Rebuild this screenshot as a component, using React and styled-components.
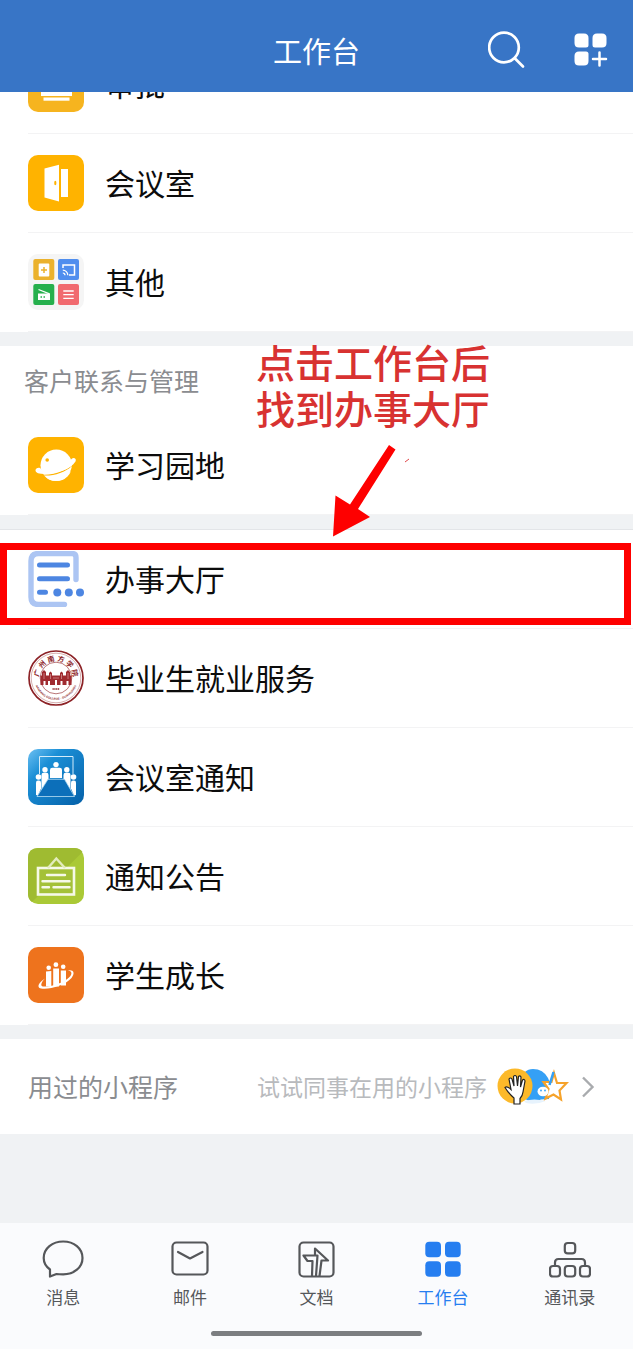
import React from "react";
import styled, { createGlobalStyle, css } from "styled-components";

const GlobalStyle = createGlobalStyle`
  * {
    box-sizing: border-box;
  }

  body {
    margin: 0;
    background: #f0f2f4;
    font-family: "Noto Sans CJK SC", "Noto Sans", sans-serif;
  }

  button {
    font-family: inherit;
    border: 0;
    padding: 0;
    background: none;
    cursor: pointer;
  }
`;

const ApprovalIcon = () => (
  <Icon viewBox="0 0 56 56" aria-hidden="true">
    <rect width="56" height="56" rx="10" fill="#f6b41f" />
    <path d="M22 10h12v14h7q3 0 3 3v13H13V27q0-3 3-3h6z" fill="#fff" />
    <rect x="15.5" y="41.5" width="26" height="3.2" fill="#fff" />
  </Icon>
);

const DoorIcon = () => (
  <Icon viewBox="0 0 56 56" aria-hidden="true">
    <rect width="56" height="56" rx="10" fill="#ffb300" />
    <path d="M16.5 13.5 31 9.8v36.6l-14.5-4z" fill="#fff" />
    <rect x="33" y="14" width="7" height="28" fill="#fff" />
    <ellipse cx="27.3" cy="28" rx="1.1" ry="2.2" fill="#ffb300" />
  </Icon>
);

const OtherIcon = () => (
  <Icon viewBox="0 0 56 56" aria-hidden="true">
    <rect width="56" height="56" rx="10" fill="#f5f5f5" />
    <rect x="5.3" y="5" width="21" height="21" rx="2" fill="#ebb22d" />
    <rect x="30" y="5" width="21" height="21" rx="2" fill="#508eee" />
    <rect x="5.3" y="30" width="21" height="21" rx="2" fill="#26b04d" />
    <rect x="30" y="30" width="21" height="21" rx="2" fill="#f16a6f" />
    <rect x="10.7" y="9.5" width="10.6" height="13" rx="1" fill="#fff" />
    <path d="M16 13v6M13 16h6" stroke="#ebb22d" strokeWidth="1.5" />
    <path d="M35 14v-3h11.5v10H41" fill="none" stroke="#fff" strokeWidth="1.5" />
    <path d="M34.8 16.2a5 5 0 0 1 5 5M34.8 19a2.2 2.2 0 0 1 2.2 2.2" fill="none" stroke="#fff" strokeWidth="1.2" />
    <path d="M10 39.5h12V46H10z" fill="#fff" />
    <path d="m10.5 35.5 11 4.3" stroke="#fff" strokeWidth="1.3" />
    <path d="M12.5 43h1.5M15.5 43H17" stroke="#26b04d" strokeWidth="1.5" />
    <path d="M35.3 37h10.4M35.3 40.7h10.4M35.3 44.3h10.4" stroke="#fff" strokeWidth="1.3" />
  </Icon>
);

const PlanetIcon = () => (
  <Icon viewBox="0 0 56 56" aria-hidden="true">
    <rect width="56" height="56" rx="10" fill="#ffb300" />
    <circle cx="28.3" cy="28.3" r="15.8" fill="#fff" />
    <path d="M8 36c9 5 33-1 41-13l2 4C43 39 21 43 9 39z" fill="#ffb300" />
    <path d="M16 38.5c10 .5 21-3 28-9.5-1.600 8.500-8 15-15.700 15-5 0-9.500-2-12.300-5.500z" fill="#fff" />
    <path d="M12 31c-5-1-6 4-2 5.300C20 39 42 34 47.500 24.500c1.500-3-2-4.500-4-2.500L36 31l-20 3.500z" fill="#fff" />
    <circle cx="19.2" cy="23" r="1.8" fill="#ffb300" />
  </Icon>
);

const HallIcon = () => (
  <Icon viewBox="0 0 56 56" aria-hidden="true">
    <path
      d="M48 28.5V6.5q0-4-4-4H10.500q-7.500 0-7.500 7.500v36q0 7.500 7.500 7.500h26"
      fill="none"
      stroke="#acc5f3"
      strokeWidth="5.4"
      strokeLinecap="round"
    />
    <path d="M11.5 14h28M11.5 27.7h28M11.5 41.3h6" stroke="#4d86e2" strokeWidth="5" strokeLinecap="round" />
    <circle cx="29.3" cy="41.5" r="4" fill="#4d86e2" />
    <circle cx="40.8" cy="41.5" r="4" fill="#4d86e2" />
    <circle cx="52" cy="41.5" r="4" fill="#4d86e2" />
  </Icon>
);

const SealIcon = () => (
  <Icon viewBox="0 0 56 56" aria-hidden="true">
    <circle cx="28" cy="28" r="27" fill="#fff" stroke="#8c2226" strokeWidth="1.7" />
    <circle cx="28" cy="28" r="24.8" fill="none" stroke="#b8787a" strokeWidth=".6" />
    <circle cx="28" cy="28" r="15.8" fill="none" stroke="#a85457" strokeWidth=".8" />
    {["广", "州", "南", "方", "学", "院"].map((char, i) => (
      <SealChar key={char} x="28" y="11" transform={`rotate(${-75 + i * 30} 28 28)`}>
        {char}
      </SealChar>
    ))}
    <path id="seal-arc" d="M6.5 31a21.7 21.7 0 0 0 43 0" fill="none" />
    <SealLatin>
      <textPath href="#seal-arc" startOffset="50%">
        NANFANG COLLEGE · GUANGZHOU
      </textPath>
    </SealLatin>
    <path
      d="M12.5 35v-9.500h1.500V22l2-2 2 2v3.500h3V23l1.500-1.500L24 23v2.500h8V23l1.500-1.500L35 23v2.500h3V22l2-2 2 2v3.500h1.500V35h-3v-4h-2v4h-4v-4h-2v4h-3.500v-5h-2v5H22v-4h-2v4h-2.500v-4h-2v4z"
      fill="#a02b30"
    />
    <path d="M16 23v6M22.500 24v5M25 28h6M33.500 24v5M40 23v6" stroke="#d99a9c" strokeWidth=".7" />
    <path d="M24.5 39h7" stroke="#8c2226" strokeWidth="1.5" strokeDasharray="1.3 .5" />
  </Icon>
);

const MeetingIcon = () => (
  <Icon viewBox="0 0 56 56" aria-hidden="true">
    <defs>
      <linearGradient id="meeting-bg" x1="0" y1="0" x2="1" y2="1">
        <stop offset="0" stopColor="#6cc0f2" />
        <stop offset=".3" stopColor="#1b8fd6" />
        <stop offset="1" stopColor="#0560a8" />
      </linearGradient>
    </defs>
    <rect width="56" height="56" rx="10" fill="url(#meeting-bg)" />
    <path d="M11.5 25V7.5H45V25" fill="none" stroke="#d3ecfa" strokeWidth="1" />
    <g fill="#fff">
      <circle cx="28" cy="15.6" r="2.7" />
      <path d="M22 29v-8q0-2.300 2.300-2.300h7.400q2.300 0 2.300 2.300v8z" />
      <circle cx="17" cy="20.7" r="2.7" />
      <path d="M13.500 41V26q0-2.300 2-2.300h3q2 0 2 2.300v4z" />
      <circle cx="38.8" cy="20.7" r="2.7" />
      <path d="M42.500 41V26q0-2.300-2-2.300h-3q-2 0-2 2.300v4z" />
      <circle cx="10.5" cy="28" r="2.8" />
      <path d="M8 46V33.500q0-2 2-2h1q2 0 2 2v6l-3 7z" />
      <circle cx="45.5" cy="28" r="2.8" />
      <path d="M48 46V33.500q0-2-2-2h-1q-2 0-2 2v6l3 7z" />
    </g>
    <path d="M20 30.3h16.5l10 17.2H9z" fill="#0c6fba" stroke="#b9def4" strokeWidth=".8" />
  </Icon>
);

const NoticeIcon = () => (
  <Icon viewBox="0 0 56 56" aria-hidden="true">
    <rect width="56" height="56" rx="10" fill="#aac936" />
    <path d="M10 0h36q6 0 8.5 4L4 54q-4-3-4-8V10Q0 0 10 0z" fill="#9fbb31" />
    <path d="M10 20h36L54 30v16q0 10-10 10H18L10 46.500z" fill="#aac936" />
    <rect x="10" y="20" width="36" height="26.5" fill="#a4c138" stroke="#f6f9e8" strokeWidth="2.6" />
    <path d="M20 20l8.300-9.500L37 20" fill="none" stroke="#e3ecbd" strokeWidth="2.4" />
    <path d="M19 27h18M14.5 33.3h27M14.5 39.2H21M25.5 39.2h16" stroke="#f6f9e8" strokeWidth="2.4" strokeLinecap="round" />
  </Icon>
);

const GrowthIcon = () => (
  <Icon viewBox="0 0 56 56" aria-hidden="true">
    <rect width="56" height="56" rx="10" fill="#ee731d" />
    <path
      d="M17 31.5C11 35 8 40.500 13 41.500c8 1.500 24-3 30.500-10.500 4-5 2-8.500-3.500-7.500 4 .5 4.500 3.500 1.500 6.500C35 36.500 22 40 15 39.500c-2.500-.5-2.500-3.500 2-8z"
      fill="#fff"
    />
    <g fill="#fff">
      <path d="M18 24.500l5.300-.5v15.500H18zM25.200 21.500h5.800v18h-5.800zM32.800 23.500h5.200V38.500h-5.200z" />
      <circle cx="20.7" cy="20.8" r="2.3" />
      <circle cx="27.9" cy="17.7" r="2.4" />
      <circle cx="35.2" cy="19.8" r="2.3" />
    </g>
  </Icon>
);

const SearchIcon = () => (
  <svg width="38" height="38" viewBox="0 0 38 38" fill="none" stroke="#fff" strokeWidth="2.7" aria-hidden="true">
    <circle cx="16" cy="16.5" r="14.8" />
    <path d="m27 27.500 8 8" strokeLinecap="round" />
  </svg>
);

const AddAppIcon = () => (
  <svg width="34" height="34" viewBox="0 0 34 34" fill="#fff" aria-hidden="true">
    <path d="M5 .5h5q4.500 0 4.500 4.500v7q0 2.500-2.500 2.500H5Q.5 14.500.5 10V5Q.5.5 5 .5z" />
    <path d="M23 .5h5Q32.500.5 32.500 5v5q0 4.500-4.500 4.500h-7q-2.500 0-2.500-2.500V5Q18.500.5 23 .5z" />
    <path d="M5 18.500h7q2.500 0 2.500 2.500v7q0 4.500-4.500 4.500H5Q.5 32.500.5 28v-5q0-4.500 4.500-4.500z" />
    <path d="M25.500 19.500v13M19 26h13" stroke="#fff" strokeWidth="2.5" strokeLinecap="round" />
  </svg>
);

const MiniPrograms = () => (
  <svg width="72" height="38" viewBox="0 0 72 38" aria-hidden="true">
    <path d="M36 1a17 17 0 0 1 15 9q3 6 1.500 13L52 31l-8 .5Q36 36 28 31V4q3-3 8-3z" fill="#35a0f5" />
    <path d="M27 33q10-3 22 0-10 4-20 2z" fill="#e7f3fd" />
    <path d="m57 5 3 10h9.500l-7 7.500 1.500 9-7.500-5-8 4 3-9.500-5-7h8z" fill="#fff" stroke="#f6a32b" strokeWidth="2.2" />
    <path d="m56.500 4-4 13" stroke="#35a0f5" strokeWidth="2.5" />
    <circle cx="18" cy="18" r="17.5" fill="#fcb929" />
    <path
      d="M17 36v-6q-5-4-9-10.500 2-2 6 2L12 11q1.500-2 3 0l2 7-.5-9.500q1.500-2 3 0l1 9.500 1-9.500q1.500-1.500 2.500.5l-.5 10 2-7q2-1.500 2.500 1L26 24q-.5 4-3 6.500V36z"
      fill="#fff"
      stroke="#222"
      strokeWidth="1.2"
    />
    <ellipse cx="46" cy="23.5" rx="5.5" ry="4.8" fill="#fff" />
    <circle cx="44" cy="22.5" r=".9" fill="#35a0f5" />
    <circle cx="48" cy="22.5" r=".9" fill="#35a0f5" />
  </svg>
);

const Chevron = () => (
  <svg width="14" height="24" viewBox="0 0 14 24" fill="none" aria-hidden="true">
    <path d="m2 2.500 9.500 9.500L2 21.500" stroke="#a9abae" strokeWidth="2.4" />
  </svg>
);

const MessageIcon = () => (
  <TabSvg viewBox="0 0 42 42" aria-hidden="true">
    <path d="M21.2 3.500C32 3.500 40.500 10.500 40.500 20s-8.500 16.300-19.300 16.300c-2.700 0-4.500 0-6.700-.3L8 38.500V31.500C4.500 29 1.700 25 1.700 20 1.700 10.500 10.400 3.500 21.200 3.500z" />
  </TabSvg>
);

const MailIcon = () => (
  <TabSvg viewBox="0 0 42 42" aria-hidden="true">
    <rect x="3.5" y="4.5" width="35" height="32" rx="4" />
    <path d="m9 14 12 6.500L33.500 14" />
  </TabSvg>
);

const DocIcon = () => (
  <TabSvg viewBox="0 0 42 42" aria-hidden="true">
    <rect x="4.5" y="4.5" width="34" height="34" rx="4" />
    <path d="M17 38l.5-15H12.500L8.500 17.500H20v-7L33 22.500h-6.500L24.500 38M20 17.500h2.500L21 38" />
  </TabSvg>
);

const WorkbenchIcon = () => (
  <TabSvg viewBox="0 0 42 42" $solid aria-hidden="true">
    <rect x="3.3" y="3.7" width="15.7" height="15.5" rx="4" />
    <rect x="23" y="3.7" width="15.7" height="15.5" rx="4" />
    <rect x="3.3" y="23.3" width="15.7" height="15.5" rx="4" />
    <rect x="23" y="23.3" width="15.7" height="15.5" rx="4" />
  </TabSvg>
);

const ContactsIcon = () => (
  <TabSvg viewBox="0 0 42 42" aria-hidden="true">
    <rect x="15.8" y="5" width="10.4" height="10.4" rx="3" />
    <rect x="1" y="28" width="10" height="10.5" rx="3" />
    <rect x="15.8" y="28" width="10.4" height="10.5" rx="3" />
    <rect x="31" y="28" width="10" height="10.5" rx="3" />
    <path d="M6 28v-3.500q0-3.500 3.500-3.500h23q3.500 0 3.500 3.500V28" />
  </TabSvg>
);

const basicApps = [
  { name: "会议室", icon: <DoorIcon /> },
  { name: "其他", icon: <OtherIcon /> },
];

const schoolApps = [
  { name: "办事大厅", icon: <HallIcon />, marked: true },
  { name: "毕业生就业服务", icon: <SealIcon /> },
  { name: "会议室通知", icon: <MeetingIcon /> },
  { name: "通知公告", icon: <NoticeIcon /> },
  { name: "学生成长", icon: <GrowthIcon /> },
];

const tabs = [
  { name: "消息", icon: <MessageIcon /> },
  { name: "邮件", icon: <MailIcon /> },
  { name: "文档", icon: <DocIcon /> },
  { name: "工作台", icon: <WorkbenchIcon />, active: true },
  { name: "通讯录", icon: <ContactsIcon /> },
];

const AppRow = ({ name, icon, marked }) => (
  <Row>
    <RowLink href="#">
      {icon}
      <RowName>{name}</RowName>
    </RowLink>
    {marked && <Marker />}
  </Row>
);

const App = () => {
  return (
    <Page>
      <GlobalStyle />
      <Header>
        <Title>工作台</Title>
        <Actions>
          <button type="button" aria-label="搜索">
            <SearchIcon />
          </button>
          <button type="button" aria-label="添加应用">
            <AddAppIcon />
          </button>
        </Actions>
      </Header>

      <Main>
        <Section>
          <ScrolledList>
            <AppRow name="审批" icon={<ApprovalIcon />} />
          </ScrolledList>
          <List>
            {basicApps.map((app) => (
              <AppRow key={app.name} {...app} />
            ))}
          </List>
        </Section>

        <Section>
          <SectionTitle>客户联系与管理</SectionTitle>
          <List>
            <AppRow name="学习园地" icon={<PlanetIcon />} />
          </List>
          <Tip>
            点击工作台后
            <br />
            找到办事大厅
          </Tip>
          <Arrow width="80" height="94" viewBox="0 0 80 94" aria-hidden="true">
            <path d="M59 2 65.500 6.500 28 66 40 74 3 93.500 5.500 52.500l14.500 9z" fill="#fe0000" />
            <path d="m75 19 4-3" stroke="#e0474a" strokeWidth="1" />
          </Arrow>
        </Section>

        <Section $lined>
          <List>
            {schoolApps.map((app) => (
              <AppRow key={app.name} {...app} />
            ))}
          </List>
        </Section>

        <Used href="#">
          <UsedTitle>用过的小程序</UsedTitle>
          <UsedHint>试试同事在用的小程序</UsedHint>
          <MiniPrograms />
          <Chevron />
        </Used>
      </Main>

      <Footer>
        <TabBar>
          {tabs.map((tab) => (
            <Tab key={tab.name} type="button" $active={tab.active}>
              {tab.icon}
              {tab.name}
            </Tab>
          ))}
        </TabBar>
        <HomeIndicator />
      </Footer>
    </Page>
  );
};

const Page = styled.div`
  display: flex;
  flex-direction: column;
  min-height: 100vh;
`;

const Header = styled.header`
  display: grid;
  grid-template-columns: 1fr auto 1fr;
  align-items: center;
  height: 92px;
  padding: 8px 25px 0;
  background: #3875c6;
  color: #fff;
`;

const Title = styled.h1`
  grid-column: 2;
  margin: 0;
  font-size: 29px;
  font-weight: 400;
  line-height: 40px;
`;

const Actions = styled.div`
  display: flex;
  justify-content: flex-end;
  align-items: center;
  gap: 48px;

  svg {
    display: block;
  }
`;

const Main = styled.main`
  display: flex;
  flex-direction: column;
  flex: 1;
  gap: 14px;
`;

const Section = styled.section`
  position: relative;
  background: #fff;
  ${(props) =>
    props.$lined &&
    css`
      border-top: 1px solid #e3e5e8;
    `}
`;

const SectionTitle = styled.h2`
  margin: 0;
  padding: 16px 24px 18px;
  color: #8a8c90;
  font-size: 25px;
  font-weight: 400;
  line-height: 36px;
`;

const List = styled.ul`
  margin: 0;
  padding: 0;
  list-style: none;
`;

const ScrolledList = styled(List)`
  display: flex;
  flex-direction: column;
  justify-content: flex-end;
  height: 42px;
  overflow: hidden;
`;

const Row = styled.li`
  position: relative;
  flex-shrink: 0;
  padding-left: 28px;
`;

const RowLink = styled.a`
  display: flex;
  align-items: center;
  gap: 21px;
  height: 99px;
  border-bottom: 1px solid #f3f3f4;
  color: #0c0c0c;
  text-decoration: none;
`;

const RowName = styled.span`
  padding-bottom: 2px;
  font-size: 30px;
  line-height: 44px;
`;

const Icon = styled.svg`
  flex-shrink: 0;
  width: 56px;
  height: 56px;
`;

const SealChar = styled.text`
  fill: #8c2226;
  font-size: 7px;
  font-weight: 700;
  text-anchor: middle;
`;

const SealLatin = styled.text`
  fill: #8c2226;
  font-family: "Liberation Sans", sans-serif;
  font-size: 3px;
  font-weight: 700;
  text-anchor: middle;
`;

const Marker = styled.div`
  position: absolute;
  top: 13px;
  right: 2px;
  left: 0;
  height: 82px;
  border: 7px solid #fe0000;
  pointer-events: none;
`;

const Tip = styled.p`
  position: absolute;
  top: -8px;
  left: 256px;
  margin: 0;
  color: #d83231;
  font-size: 39px;
  font-weight: 500;
  line-height: 46px;
`;

const Arrow = styled.svg`
  position: absolute;
  top: 97px;
  left: 330px;
  z-index: 1;
`;

const Used = styled.a`
  display: flex;
  align-items: center;
  height: 95px;
  padding: 0 38px 0 28px;
  background: #fff;
  text-decoration: none;
`;

const UsedTitle = styled.span`
  flex: 1;
  padding-bottom: 2px;
  color: #8a8c90;
  font-size: 25px;
  line-height: 36px;
`;

const UsedHint = styled.span`
  margin-right: 10px;
  padding-bottom: 2px;
  color: #b8babd;
  font-size: 23px;
  line-height: 36px;

  & + svg {
    margin-right: 12px;
  }
`;

const Footer = styled.footer`
  padding: 15px 0 13px;
  background: #fafbfd;
`;

const TabBar = styled.nav`
  display: grid;
  grid-template-columns: repeat(5, 1fr);
`;

const Tab = styled.button`
  display: flex;
  flex-direction: column;
  align-items: center;
  gap: 5px;
  color: ${(props) => (props.$active ? "#267ef0" : "#55575a")};
  font-size: 17px;
  line-height: 24px;
`;

const TabSvg = styled.svg`
  width: 42px;
  height: 42px;
  fill: ${(props) => (props.$solid ? "currentColor" : "none")};
  stroke: ${(props) => (props.$solid ? "none" : "currentColor")};
  stroke-width: 2.2px;
  stroke-linejoin: round;
  stroke-linecap: round;
`;

const HomeIndicator = styled.div`
  width: 33.3%;
  height: 5px;
  margin: 22px auto 0;
  border-radius: 3px;
  background: #7c7e81;
`;

export default App;
